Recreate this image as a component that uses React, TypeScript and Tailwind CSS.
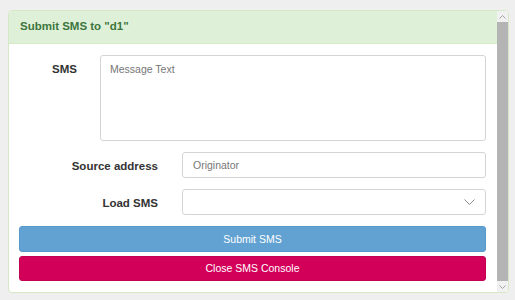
import React from 'react';

function Chevron({ up }: { up?: boolean }) {
  return (
    <svg width="7" height="4" viewBox="0 0 7 4" className="text-[#a3a3a3]">
      <path
        d={up ? 'M0.5 3.5 L3.5 0.5 L6.5 3.5' : 'M0.5 0.5 L3.5 3.5 L6.5 0.5'}
        fill="none"
        stroke="currentColor"
        strokeWidth="1"
      />
    </svg>
  );
}

export default function App() {
  return (
    <div
      className="h-[300px] w-[515px] bg-[#efefef] pt-[10px] pl-[8px]"
      style={{ fontFamily: '"Liberation Sans", Arial, sans-serif' }}
    >
      <div className="flex h-[283px] w-[501px] overflow-hidden rounded-[4px] border border-[#d6e9c6] bg-white">
        <div className="flex flex-1 flex-col">
          <div className="flex h-[33px] items-center border-b border-[#d6e9c6] bg-[#dff0d8] pl-[11px]">
            <span className="text-[11.5px] font-bold text-[#3c763d]">
              Submit SMS to "d1"
            </span>
          </div>
          <div className="flex flex-col pt-[11px] pl-[10px] pr-[11px]">
            <div className="flex">
              <label className="w-[81px] pt-[6px] pr-[23px] text-right text-[11.5px] font-bold text-[#333]">
                SMS
              </label>
              <textarea
                placeholder="Message Text"
                className="h-[86px] flex-1 resize-none rounded-[3px] border border-[#d4d4d4] px-[9px] py-[6px] text-[10.5px] text-[#555] outline-none placeholder:text-[#777]"
              />
            </div>
            <div className="mt-[11px] flex items-center">
              <label className="w-[163px] pt-[3px] pr-[24px] text-right text-[11.5px] font-bold text-[#333]">
                Source address
              </label>
              <input
                placeholder="Originator"
                className="h-[26px] flex-1 rounded-[3px] border border-[#d4d4d4] px-[10px] text-[10.5px] text-[#555] outline-none placeholder:text-[#777]"
              />
            </div>
            <div className="mt-[11px] flex items-center">
              <label className="w-[163px] pt-[3px] pr-[24px] text-right text-[11.5px] font-bold text-[#333]">
                Load SMS
              </label>
              <div className="flex h-[26px] flex-1 items-center justify-end rounded-[3px] border border-[#d4d4d4] pr-[10px]">
                <svg width="11" height="6" viewBox="0 0 11 6">
                  <path d="M0.5 0.5 L5.5 5.5 L10.5 0.5" fill="none" stroke="#8a8a8a" strokeWidth="1" />
                </svg>
              </div>
            </div>
            <button className="mt-[11px] h-[26px] rounded-[3px] border border-[#5897cb] bg-[#62a2d3] pt-[1px] text-[10.5px] text-white">
              Submit SMS
            </button>
            <button className="mt-[4px] h-[25px] rounded-[3px] border border-[#c20052] bg-[#d3005a] pt-[1px] text-[10.5px] text-white">
              Close SMS Console
            </button>
          </div>
        </div>
        <div className="flex w-[11px] flex-col bg-[#f1f1f1]">
          <div className="flex h-[11px] items-center justify-center">
            <Chevron up />
          </div>
          <div className="flex-1 bg-[#b4b4b4]" />
          <div className="flex h-[11px] items-center justify-center">
            <Chevron />
          </div>
        </div>
      </div>
    </div>
  );
}
